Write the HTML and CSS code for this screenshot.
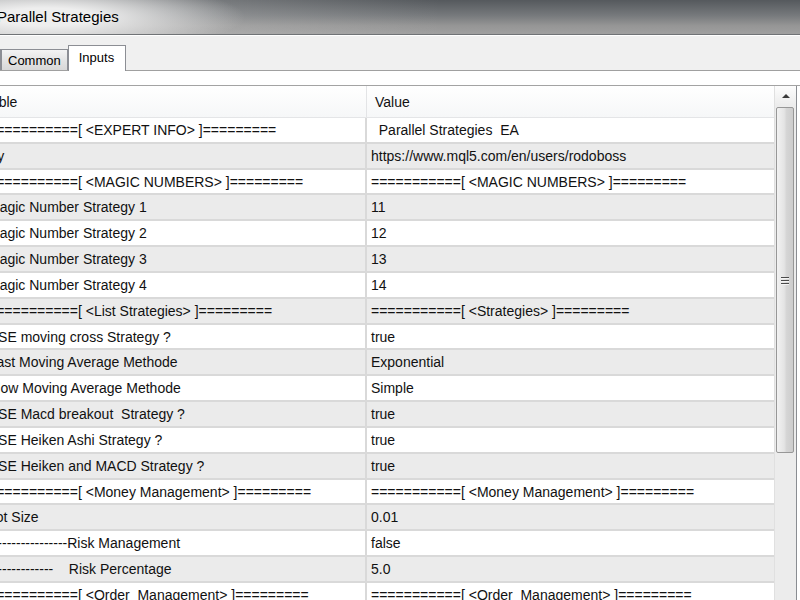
FILE: index.html
```html
<!DOCTYPE html>
<html lang="en">
<head>
  <meta charset="UTF-8">
  <title>Parallel Strategies</title>
  <link rel="stylesheet" href="styles.css">
</head>
<body>
  <div class="titlebar"><span class="title">Parallel Strategies</span></div>

  <div class="tabs">
    <div class="tab about">About</div>
    <div class="tab">Common</div>
    <div class="tab active">Inputs</div>
  </div>

  <div class="panel">
    <div class="grid">
      <div class="head">
        <div class="var"><span class="head-var">Variable</span></div>
        <div class="val">Value</div>
      </div>
      <div class="rows">
        <div class="row"><div class="var">===========[ &lt;EXPERT INFO&gt; ]=========</div><div class="val">  Parallel Strategies  EA</div></div>
        <div class="row"><div class="var">By</div><div class="val">https://www.mql5.com/en/users/rodoboss</div></div>
        <div class="row"><div class="var">===========[ &lt;MAGIC NUMBERS&gt; ]=========</div><div class="val">===========[ &lt;MAGIC NUMBERS&gt; ]=========</div></div>
        <div class="row"><div class="var">Magic Number Strategy 1</div><div class="val">11</div></div>
        <div class="row"><div class="var">Magic Number Strategy 2</div><div class="val">12</div></div>
        <div class="row"><div class="var">Magic Number Strategy 3</div><div class="val">13</div></div>
        <div class="row"><div class="var">Magic Number Strategy 4</div><div class="val">14</div></div>
        <div class="row"><div class="var">===========[ &lt;List Strategies&gt; ]=========</div><div class="val">===========[ &lt;Strategies&gt; ]=========</div></div>
        <div class="row"><div class="var">USE moving cross Strategy ?</div><div class="val">true</div></div>
        <div class="row"><div class="var">Fast Moving Average Methode</div><div class="val">Exponential</div></div>
        <div class="row"><div class="var">Slow Moving Average Methode</div><div class="val">Simple</div></div>
        <div class="row"><div class="var">USE Macd breakout  Strategy ?</div><div class="val">true</div></div>
        <div class="row"><div class="var">USE Heiken Ashi Strategy ?</div><div class="val">true</div></div>
        <div class="row"><div class="var">USE Heiken and MACD Strategy ?</div><div class="val">true</div></div>
        <div class="row"><div class="var">===========[ &lt;Money Management&gt; ]=========</div><div class="val">===========[ &lt;Money Management&gt; ]=========</div></div>
        <div class="row"><div class="var">Lot Size</div><div class="val">0.01</div></div>
        <div class="row"><div class="var">-----------------Risk Management</div><div class="val">false</div></div>
        <div class="row"><div class="var">--------------    Risk Percentage</div><div class="val">5.0</div></div>
        <div class="row"><div class="var">===========[ &lt;Order  Management&gt; ]=========</div><div class="val">===========[ &lt;Order  Management&gt; ]=========</div></div>
        <div class="row"><div class="var">Take Profit</div><div class="val">0</div></div>
      </div>
    </div>

    <div class="scrollbar">
      <div class="arrow-up"><span class="tri"></span></div>
      <div class="thumb">
        <div class="grip"><span></span><span></span><span></span></div>
      </div>
    </div>
  </div>
</body>
</html>
```

FILE: styles.css
```css
body { margin: 0; width: 800px; height: 600px; overflow: hidden; background: #fff; color: #111; font-family: "Liberation Sans", Arial, sans-serif; font-size: 14px; }

/* window caption (aero glass) */
.titlebar { height: 34px; border-bottom: 1px solid #707376;
  background:
    radial-gradient(ellipse 200px 36px at 45px 17px, rgba(238,238,238,1) 25%, rgba(230,230,230,0) 100%),
    linear-gradient(to right, rgba(200,200,200,.55), rgba(200,200,200,0) 55%),
    linear-gradient(#55595d, #76797c 45%, #959595 75%, #a0a0a0); }
.title { display: block; margin-left: -3px; line-height: 34px; font-size: 15px; color: #000; }

/* tab strip */
.tabs { height: 34px; display: flex; align-items: flex-end; background: #f0f0f0; border-top: 1px solid #fff; border-bottom: 1px solid #a0a0a0; }
.tab { box-sizing: border-box; height: 21px; padding: 0 6px; line-height: 21px; font-size: 13px; border: 1px solid #8c8e94; border-bottom: none; background: linear-gradient(#f3f3f3, #e4e4e4 50%, #d8d8d8); color: #000; white-space: nowrap; }
.tab.about { width: 60px; margin-left: -59px; }
.tab.active { height: 26px; width: 58px; padding: 0 0 0 10px; line-height: 23px; margin-bottom: -1px; background: #fff; position: relative; }

/* list view */
.panel { display: flex; margin-top: 14px; margin-left: -16px; border-top: 1px solid #a3a3a3; }
.grid { width: 790px; flex: none; }
.head { display: flex; height: 32px; box-sizing: border-box; border-bottom: 1px solid #e4e5e7; background: linear-gradient(#fff, #f6f7f8); }
.head .var { border-right: 1px solid #e3e4e6; }
.head .val { padding-left: 8px; }
.head-var { margin-left: -21px; }
.row { display: flex; height: 25.83px; box-sizing: border-box; border-bottom: 2px solid #d9d9d9; }
.rows .row:nth-child(even) { background: #ebebeb; }
.var, .val { display: flex; align-items: center; box-sizing: border-box; white-space: pre; overflow: hidden; }
.var { width: 383px; flex: none; padding-left: 4px; }
.row .var { border-right: 2px solid #d9d9d9; }
.val { flex: 1; padding-left: 4px; }

/* vertical scrollbar */
.scrollbar { width: 21px; flex: none; height: 520px; background: #ececec; border-left: 1px solid #e0e0e0; border-right: 1px solid #8a8d92; }
.arrow-up { height: 19px; display: flex; align-items: center; justify-content: center; background: linear-gradient(#fdfdfd, #ececec); }
.tri { width: 0; height: 0; border-left: 4px solid transparent; border-right: 4px solid transparent; border-bottom: 4px solid #3a3a3a; }
.thumb { box-sizing: border-box; width: 18px; height: 346px; margin: 2px 0 0 1px; border: 1px solid #979797; border-radius: 2px; display: flex; align-items: center; justify-content: center;
  background: linear-gradient(to right, #f2f2f2, #e4e4e4 45%, #d5d5d5 60%, #cdcdcd); }
.grip { display: flex; flex-direction: column; gap: 2px; }
.grip span { display: block; width: 8px; height: 1px; background: #4a4a4a; box-shadow: 0 1px 0 #f4f4f4; }
```
